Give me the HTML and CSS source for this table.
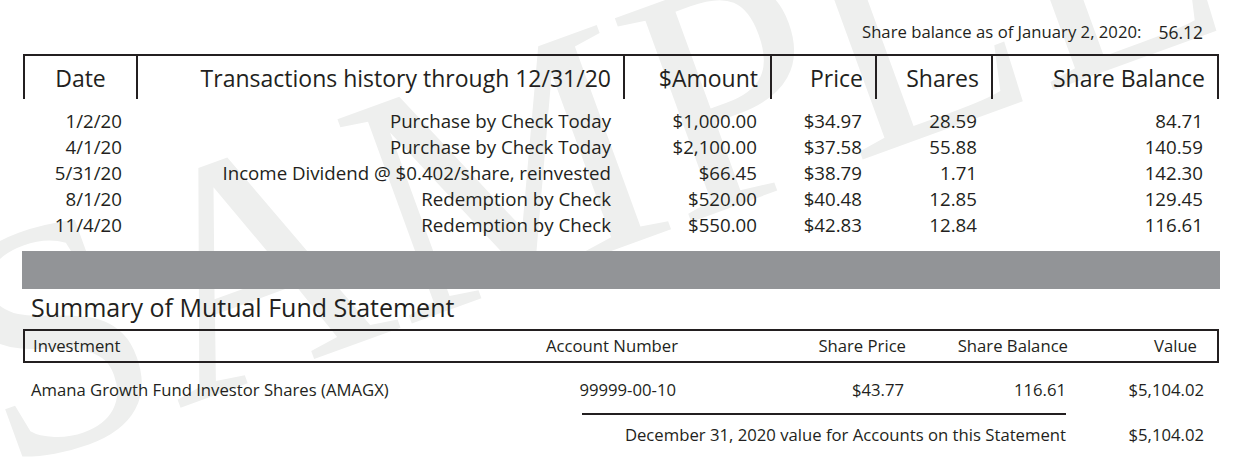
FILE: index.html
```html
<!DOCTYPE html>
<html lang="en">
<head>
<meta charset="utf-8">
<title>Mutual Fund Statement</title>
<link rel="stylesheet" href="styles.css">
</head>
<body>
<svg class="watermark" width="1246" height="471" viewBox="0 0 1246 471" aria-hidden="true">
  <text x="4" y="472" transform="rotate(-20 4 472)" class="wm-text">SAMPLE</text>
</svg>
<main class="sheet">
  <div class="opening">
    <span class="opening-label">Share balance as of January 2, 2020:</span>
    <span class="opening-value">56.12</span>
  </div>

  <section class="history">
    <div class="hist-head">
      <div class="hcell hcell-date">Date</div>
      <div class="hcell">Transactions history through 12/31/20</div>
      <div class="hcell">$Amount</div>
      <div class="hcell">Price</div>
      <div class="hcell">Shares</div>
      <div class="hcell hcell-last">Share Balance</div>
    </div>
    <div class="hist-body">
      <div class="hist-row">
        <span class="c-date">1/2/20</span><span class="c-desc">Purchase by Check Today</span><span class="c-amt">$1,000.00</span><span class="c-price">$34.97</span><span class="c-shares">28.59</span><span class="c-bal">84.71</span>
      </div>
      <div class="hist-row">
        <span class="c-date">4/1/20</span><span class="c-desc">Purchase by Check Today</span><span class="c-amt">$2,100.00</span><span class="c-price">$37.58</span><span class="c-shares">55.88</span><span class="c-bal">140.59</span>
      </div>
      <div class="hist-row">
        <span class="c-date">5/31/20</span><span class="c-desc">Income Dividend @ $0.402/share, reinvested</span><span class="c-amt">$66.45</span><span class="c-price">$38.79</span><span class="c-shares">1.71</span><span class="c-bal">142.30</span>
      </div>
      <div class="hist-row">
        <span class="c-date">8/1/20</span><span class="c-desc">Redemption by Check</span><span class="c-amt">$520.00</span><span class="c-price">$40.48</span><span class="c-shares">12.85</span><span class="c-bal">129.45</span>
      </div>
      <div class="hist-row">
        <span class="c-date">11/4/20</span><span class="c-desc">Redemption by Check</span><span class="c-amt">$550.00</span><span class="c-price">$42.83</span><span class="c-shares">12.84</span><span class="c-bal">116.61</span>
      </div>
    </div>
  </section>

  <div class="divider-bar"></div>

  <section class="summary">
    <h2 class="summary-title">Summary of Mutual Fund Statement</h2>
    <div class="sum-head">
      <span class="s-inv">Investment</span>
      <span class="s-acct">Account Number</span>
      <span class="s-price">Share Price</span>
      <span class="s-bal">Share Balance</span>
      <span class="s-val s-val-head">Value</span>
    </div>
    <div class="sum-row">
      <span class="s-inv">Amana Growth Fund Investor Shares (AMAGX)</span>
      <span class="s-acct">99999-00-10</span>
      <span class="s-price">$43.77</span>
      <span class="s-bal">116.61</span>
      <span class="s-val">$5,104.02</span>
    </div>
    <div class="sum-total">
      <span class="total-label">December 31, 2020 value for Accounts on this Statement</span>
      <span class="s-val">$5,104.02</span>
    </div>
  </section>
</main>
</body>
</html>
```
FILE: styles.css
```css
* { box-sizing: border-box; }

html, body {
  margin: 0;
  padding: 0;
  background: #ffffff;
}

body {
  position: relative;
  width: 1246px;
  height: 471px;
  overflow: hidden;
  font-family: "Open Sans", "Noto Sans", sans-serif;
  color: #231f20;
}

.watermark {
  position: absolute;
  left: 0;
  top: 0;
  z-index: 0;
  pointer-events: none;
}

.wm-text {
  font-family: "Liberation Serif", "Times New Roman", serif;
  font-size: 332px;
  fill: #eeefee;
}

.sheet {
  position: relative;
  z-index: 1;
  margin-left: 22px;
  width: 1198px;
  padding-top: 22px;
}

/* opening balance */
.opening {
  display: flex;
  justify-content: flex-end;
  font-size: 16.7px;
  line-height: 20px;
  padding-right: 17px;
}
.opening-value {
  margin-left: 17px;
  font-size: 17.5px;
}

/* history table */
.history {
  margin: 12px 1px 0;
}
.hist-head,
.hist-row {
  display: grid;
  grid-template-columns: 113px 487px 147px 105px 116px 228px;
}
.hist-head {
  border-top: 2px solid #231f20;
}
.hcell {
  border-left: 2px solid #231f20;
  font-size: 23px;
  line-height: 30px;
  padding: 7px 12px 6px 0;
  text-align: right;
  white-space: nowrap;
}
.hcell-date {
  text-align: center;
  padding-right: 0;
}
.hcell-last {
  border-right: 2px solid #231f20;
}

.hist-body {
  padding-top: 9px;
}
.hist-row {
  font-size: 18.7px;
  line-height: 26px;
  white-space: nowrap;
}
.hist-row span { text-align: right; }
.c-date { padding-right: 14px; }
.c-desc { padding-right: 12px; }
.c-amt { padding-right: 13px; }
.c-price { padding-right: 13px; }
.c-shares { padding-right: 14px; }
.c-bal { padding-right: 16px; }

.divider-bar {
  margin-top: 13px;
  height: 38px;
  background: #929497;
}

/* summary */
.summary-title {
  margin: 3px 0 0;
  padding-left: 9px;
  font-size: 25px;
  font-weight: normal;
  line-height: 30px;
}
.sum-head,
.sum-row,
.sum-total {
  display: grid;
  grid-template-columns: 395px 258px 228px 162px 138px;
  padding-right: 11px;
  font-size: 16.7px;
  line-height: 30px;
  white-space: nowrap;
}
.sum-head {
  margin: 7px 1px 0;
  border: 2px solid #231f20;
}
.sum-row {
  margin: 12px 1px 0;
}
.s-inv { padding-left: 8px; }
.s-acct, .s-price, .s-bal, .s-val { text-align: right; }
.s-val-head { padding-right: 9px; }

.sum-total {
  margin: 8px 1px 0;
}
.total-label {
  grid-column: 2 / 5;
  justify-self: end;
  width: 484px;
  border-top: 2px solid #231f20;
  padding-top: 5px;
  text-align: right;
}
.sum-total .s-val {
  grid-column: 5;
  padding-top: 7px;
}
```
